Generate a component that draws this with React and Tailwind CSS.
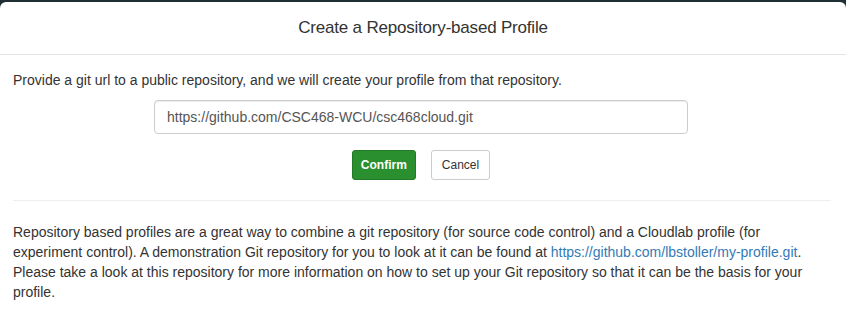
export default function App() {
  return (
    <div className="w-[846px] h-[325px] overflow-hidden bg-[#1f3035] pt-[2px] font-['Liberation_Sans',Arial,sans-serif] text-[#333]">
      <div className="bg-white rounded-t-[6px] h-full">
        {/* Header */}
        <div className="h-[53px] border-b border-[#e5e5e5] flex items-center justify-center">
          <h4 className="text-[17px] leading-[26px] tracking-[-0.2px]">Create a Repository-based Profile</h4>
        </div>

        {/* Body */}
        <div className="pl-[13px] pr-[15px] pt-[15px]">
          <p className="text-[14px] leading-[20px]">
            Provide a git url to a public repository, and we will create your profile from that repository.
          </p>
          <div className="mt-[10px] flex justify-center pr-[2px]">
            <input
              readOnly
              value="https://github.com/CSC468-WCU/csc468cloud.git"
              className="w-[534px] h-[34px] border border-[#ccc] rounded-[4px] px-[12px] text-[14px] text-[#555] shadow-[inset_0_1px_1px_rgba(0,0,0,0.075)] outline-none"
            />
          </div>
          <div className="mt-[16px] flex justify-center gap-[15px] pr-[2px]">
            <button className="h-[30px] px-[8px] rounded-[3px] bg-[#2a8f2e] border border-[#237a26] text-white text-[12px] font-bold">
              Confirm
            </button>
            <button className="h-[30px] px-[10px] rounded-[3px] bg-white border border-[#ccc] text-[#333] text-[12px]">
              Cancel
            </button>
          </div>
          <hr className="mt-[20px] border-t border-[#eee]" />
          <p className="mt-[21px] text-[14px] leading-[20px] whitespace-nowrap">
            Repository based profiles are a great way to combine a git repository (for source code control) and a Cloudlab profile (for
            <br />
            experiment control). A demonstration Git repository for you to look at it can be found at{" "}
            <a className="text-[#337ab7]" href="#">https://github.com/lbstoller/my-profile.git</a>.
            <br />
            Please take a look at this repository for more information on how to set up your Git repository so that it can be the basis for your
            <br />
            profile.
          </p>
        </div>
      </div>
    </div>
  );
}
